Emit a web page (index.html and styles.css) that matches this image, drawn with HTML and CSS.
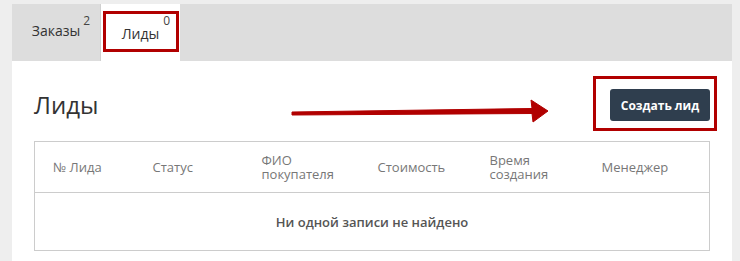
FILE: index.html
```html
<!DOCTYPE html>
<html lang="ru">
<head>
<meta charset="utf-8">
<link rel="stylesheet" href="styles.css">
</head>
<body>
<div class="page">
  <div class="tabs">
    <div class="tab">
      <span class="tab-label">Заказы<span class="count">2</span></span>
    </div>
    <div class="tab tab-active">
      <span class="tab-label">Лиды<span class="count count-active">0</span></span>
      <span class="mark mark-tab"></span>
    </div>
  </div>
  <div class="panel">
    <div class="panel-head">
      <h1 class="title">Лиды</h1>
      <div class="btn-wrap">
        <button class="btn">Создать лид</button>
        <span class="mark mark-btn"></span>
      </div>
    </div>
    <table class="grid">
      <thead>
        <tr>
          <th class="c1">№ Лида</th>
          <th class="c2">Статус</th>
          <th class="c3">ФИО<br>покупателя</th>
          <th class="c4">Стоимость</th>
          <th class="c5">Время<br>создания</th>
          <th class="c6">Менеджер</th>
        </tr>
      </thead>
      <tbody>
        <tr>
          <td class="empty" colspan="6">Ни одной записи не найдено</td>
        </tr>
      </tbody>
    </table>
    <svg class="arrow" width="280" height="36" viewBox="0 0 280 36">
      <polygon points="12,17 252,13.5 251,5 268,16 253,27 252,18.5 12,20" fill="#b10000" stroke="#b10000" stroke-width="1" stroke-linejoin="round"/>
    </svg>
  </div>
</div>
</body>
</html>
```
FILE: styles.css
```css
* { box-sizing: border-box; }
html, body { margin: 0; padding: 0; }
body {
  background: #eeeeee;
  font-family: "Open Sans", "Noto Sans", sans-serif;
  color: #333;
}
.page {
  padding: 4px 8px 0 12px;
}
.tabs {
  display: flex;
  height: 57px;
  background: #dddddd;
}
.tab {
  position: relative;
  width: 89px;
  display: flex;
  justify-content: center;
  padding-top: 17px;
  border-right: 1px solid #d0d0d0;
}
.tab-active {
  width: 79px;
  background: #fff;
  border-right: none;
  padding-top: 20px;
}
.tab-label {
  position: relative;
  font-size: 14px;
  line-height: 20px;
  height: 20px;
  color: #333;
}
.count {
  position: absolute;
  left: calc(100% + 3px);
  top: -7px;
  font-size: 12px;
  line-height: 14px;
  color: #444;
}
.count-active { left: calc(100% + 4px); top: -10px; }
.mark {
  position: absolute;
  border: 3px solid #b10000;
}
.mark-tab {
  left: 2px;
  top: 7px;
  width: 76px;
  height: 41px;
}
.panel {
  position: relative;
  background: #fff;
  padding: 28px 22px 20px 22px;
  min-height: 210px;
}
.panel-head {
  display: flex;
  justify-content: space-between;
  align-items: center;
  height: 32px;
  margin-bottom: 20px;
}
.title {
  margin: 0;
  font-size: 24px;
  font-weight: 400;
  line-height: 32px;
  color: #333;
}
.btn-wrap { position: relative; }
.btn {
  display: block;
  width: 100px;
  height: 32px;
  border: none;
  border-radius: 3px;
  background: #2f3e4e;
  color: #fff;
  font-family: "Open Sans", "Noto Sans", sans-serif;
  font-weight: 700;
  font-size: 12px;
  padding: 0;
}
.mark-btn {
  left: -17px;
  top: -13px;
  width: 124px;
  height: 55px;
}
.grid {
  width: 100%;
  border-collapse: collapse;
  border: 1px solid #cccccc;
  table-layout: fixed;
}
.grid th {
  height: 51px;
  text-align: left;
  font-weight: 400;
  font-size: 13px;
  line-height: 14px;
  color: #777;
  padding: 0 0 0 18px;
  border-bottom: 1px solid #cccccc;
  vertical-align: middle;
}
.c1 { width: 100px; }
.c2 { width: 109px; }
.c3 { width: 116px; }
.c4 { width: 112px; }
.c5 { width: 112px; }
.grid td.empty {
  height: 58px;
  text-align: center;
  font-size: 13px;
  font-weight: 600;
  color: #555;
}
.arrow {
  position: absolute;
  left: 268px;
  top: 34px;
}
```
